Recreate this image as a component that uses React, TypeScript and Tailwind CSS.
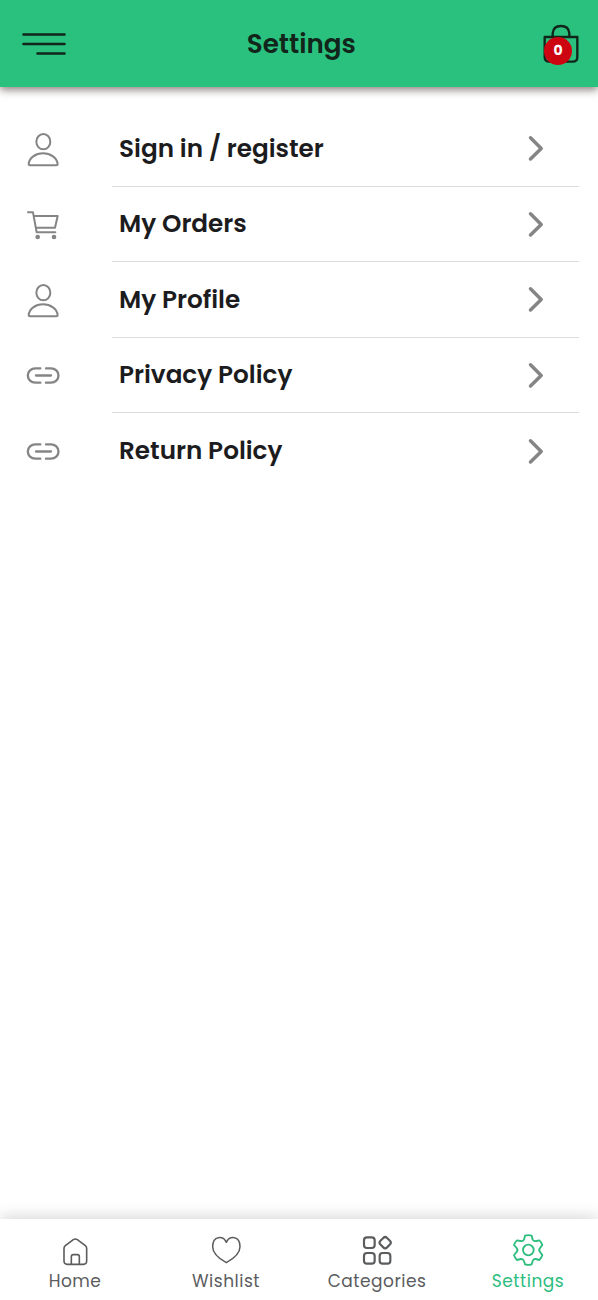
import React from 'react';

const FONT = 'font-["Poppins","Inter","Liberation_Sans",sans-serif]';

// ICONS
function MenuIcon() {
  return (
    <svg width="46" height="26" viewBox="0 0 46 26" fill="none" stroke="#12251b" strokeWidth="2.6" strokeLinecap="round">
      <path d="M2.5 3.5H43.5M2.5 13H43.5M16.5 22.5H43.5" />
    </svg>
  );
}

function BagIcon() {
  return (
    <svg width="38" height="40" viewBox="0 0 114 120" fill="none" stroke="#12251b" strokeWidth="7">
      <path d="M11 39H109V99Q109 113 95 113H25Q11 113 11 99Z" strokeLinejoin="round" />
      <path d="M35 39V28Q37 6 60 6T85 28V39" />
    </svg>
  );
}

function PersonIcon() {
  return (
    <svg width="34" height="36" viewBox="0 0 102 108" fill="none" stroke="#858585" strokeWidth="6" strokeLinejoin="round">
      <ellipse cx="52" cy="32" rx="21" ry="23" />
      <path d="M8 100C9 80 29 67 51 67S94 80 95 100Q95 103 91 103H12Q8 103 8 100Z" />
    </svg>
  );
}

function CartIcon() {
  return (
    <svg width="34" height="36" viewBox="0 0 102 108" fill="none" stroke="#858585" strokeWidth="6" strokeLinecap="round" strokeLinejoin="round">
      <path d="M6 19H21L32 79H88" />
      <path d="M24 30H95L87 65H30" />
      <circle cx="35" cy="93" r="7" fill="#858585" stroke="none" />
      <circle cx="84" cy="93" r="7" fill="#858585" stroke="none" />
    </svg>
  );
}

function LinkIcon() {
  return (
    <svg width="34" height="36" viewBox="0 0 102 108" fill="none" stroke="#858585" strokeWidth="7" strokeLinecap="round">
      <path d="M43 34H28A22 21 0 0 0 28 77H43" />
      <path d="M60 34H75A22 21 0 0 1 75 77H60" />
      <path d="M30 55.5H75" />
    </svg>
  );
}

function Chevron() {
  return (
    <svg width="16" height="28" viewBox="0 0 16 28" fill="none" stroke="#858585" strokeWidth="3.5" strokeLinecap="round" strokeLinejoin="round">
      <path d="M2.5 3.8L13.2 14.4L2.5 25" />
    </svg>
  );
}

function HomeIcon() {
  return (
    <svg width="32" height="34" viewBox="0 0 96 102" fill="none" stroke="currentColor" strokeWidth="4.8" strokeLinejoin="round">
      <path d="M15 46Q15 41 19 38L43 20Q49 16 55 20L79 38Q83 41 83 46V84Q83 94 73 94H25Q15 94 15 84Z" />
      <path d="M37 94V71Q37 65 43 65H55Q61 65 61 71V94" />
    </svg>
  );
}

function HeartIcon() {
  return (
    <svg width="32" height="34" viewBox="0 0 96 102" fill="none" stroke="currentColor" strokeWidth="4.5" strokeLinejoin="round">
      <path d="M49 28C43 14 32 13 25 14C12 16 8 29 8 41C8 62 26 76 49 89C72 76 90 62 90 41C90 29 85 16 73 14C65 13 55 14 49 28Z" />
    </svg>
  );
}

function CategoriesIcon() {
  return (
    <svg width="32" height="34" viewBox="0 0 96 102" fill="none" stroke="currentColor" strokeWidth="6.5" strokeLinejoin="round">
      <rect x="9" y="13" width="32" height="32" rx="9" />
      <rect x="9" y="60" width="32" height="32" rx="9" />
      <rect x="56" y="60" width="32" height="32" rx="9" />
      <rect x="58.5" y="15" width="28" height="28" rx="8" transform="rotate(45 72.5 29)" />
    </svg>
  );
}

function GearIcon() {
  return (
    <svg width="32" height="34" viewBox="0 0 96 102" fill="none" stroke="currentColor" strokeWidth="5.5" strokeLinejoin="round">
      <path d="M39 8Q49 5 59 8L62 20Q65 26 73 24L82 22Q88 27 91 36L85 44Q78 51 85 58L91 66Q88 76 82 81L71 78Q64 77 62 84L59 94Q49 97 39 94L36 84Q33 77 26 78L15 81Q9 76 6 66L13 58Q20 51 13 44L6 36Q9 27 15 22L25 24Q33 26 36 20Z" />
      <circle cx="49" cy="51" r="16" />
    </svg>
  );
}

const rows = [
  { label: 'Sign in / register', icon: PersonIcon },
  { label: 'My Orders', icon: CartIcon },
  { label: 'My Profile', icon: PersonIcon },
  { label: 'Privacy Policy', icon: LinkIcon },
  { label: 'Return Policy', icon: LinkIcon },
];

const tabs = [
  { label: 'Home', icon: HomeIcon, color: 'text-[#5b5c5e]' },
  { label: 'Wishlist', icon: HeartIcon, color: 'text-[#5b5c5e]' },
  { label: 'Categories', icon: CategoriesIcon, color: 'text-[#5b5c5e]' },
  { label: 'Settings', icon: GearIcon, color: 'text-[#2dbd7e]' },
];

export default function App() {
  return (
    <div className={`flex h-[1300px] w-[598px] flex-col overflow-hidden bg-white ${FONT}`}>
      <header className="flex h-[86.5px] shrink-0 items-center justify-between bg-[#2ac17e] pt-[2px] pr-[18.5px] pl-[21px] shadow-[0_3px_8px_rgba(50,30,30,0.55)]">
        <button className="flex w-[62px]">
          <MenuIcon />
        </button>
        <h1 className="text-[26.2px] leading-none font-semibold text-[#12251b]">Settings</h1>
        <button className="flex w-[60px] justify-end">
          <span className="relative">
            <BagIcon />
            <span className="absolute top-[12.5px] left-[2.5px] flex h-7 w-7 items-center justify-center rounded-full bg-[#cc0510] text-[14px] font-bold text-white">
              0
            </span>
          </span>
        </button>
      </header>

      <main className="flex-1 pt-[24.5px]">
        {rows.map(({ label, icon: Icon }, i) => (
          <div key={label} className="flex h-[75.5px] items-center pr-[19px] pl-[26px]">
            <Icon />
            <div
              className={`ml-[51.5px] flex h-full flex-1 items-center justify-between pr-[35.5px] pl-[7.5px] ${
                i < rows.length - 1 ? 'border-b border-[#dcdcdc]' : ''
              }`}>
              <span className="pt-[2px] text-[24.7px] leading-none font-semibold whitespace-nowrap text-[#1c1c1e]">{label}</span>
              <Chevron />
            </div>
          </div>
        ))}
      </main>

      <nav className="flex h-[81px] shrink-0 justify-between bg-white pt-[14px] pr-5 pl-[25px] shadow-[0_-3px_14px_rgba(0,0,0,0.15)]">
        {tabs.map(({ label, icon: Icon, color }) => (
          <button key={label} className={`flex w-[100px] flex-col items-center text-[17px] leading-[28px] tracking-[0.5px] whitespace-nowrap ${color}`}>
            <Icon />
            <span>{label}</span>
          </button>
        ))}
      </nav>
    </div>
  );
}
